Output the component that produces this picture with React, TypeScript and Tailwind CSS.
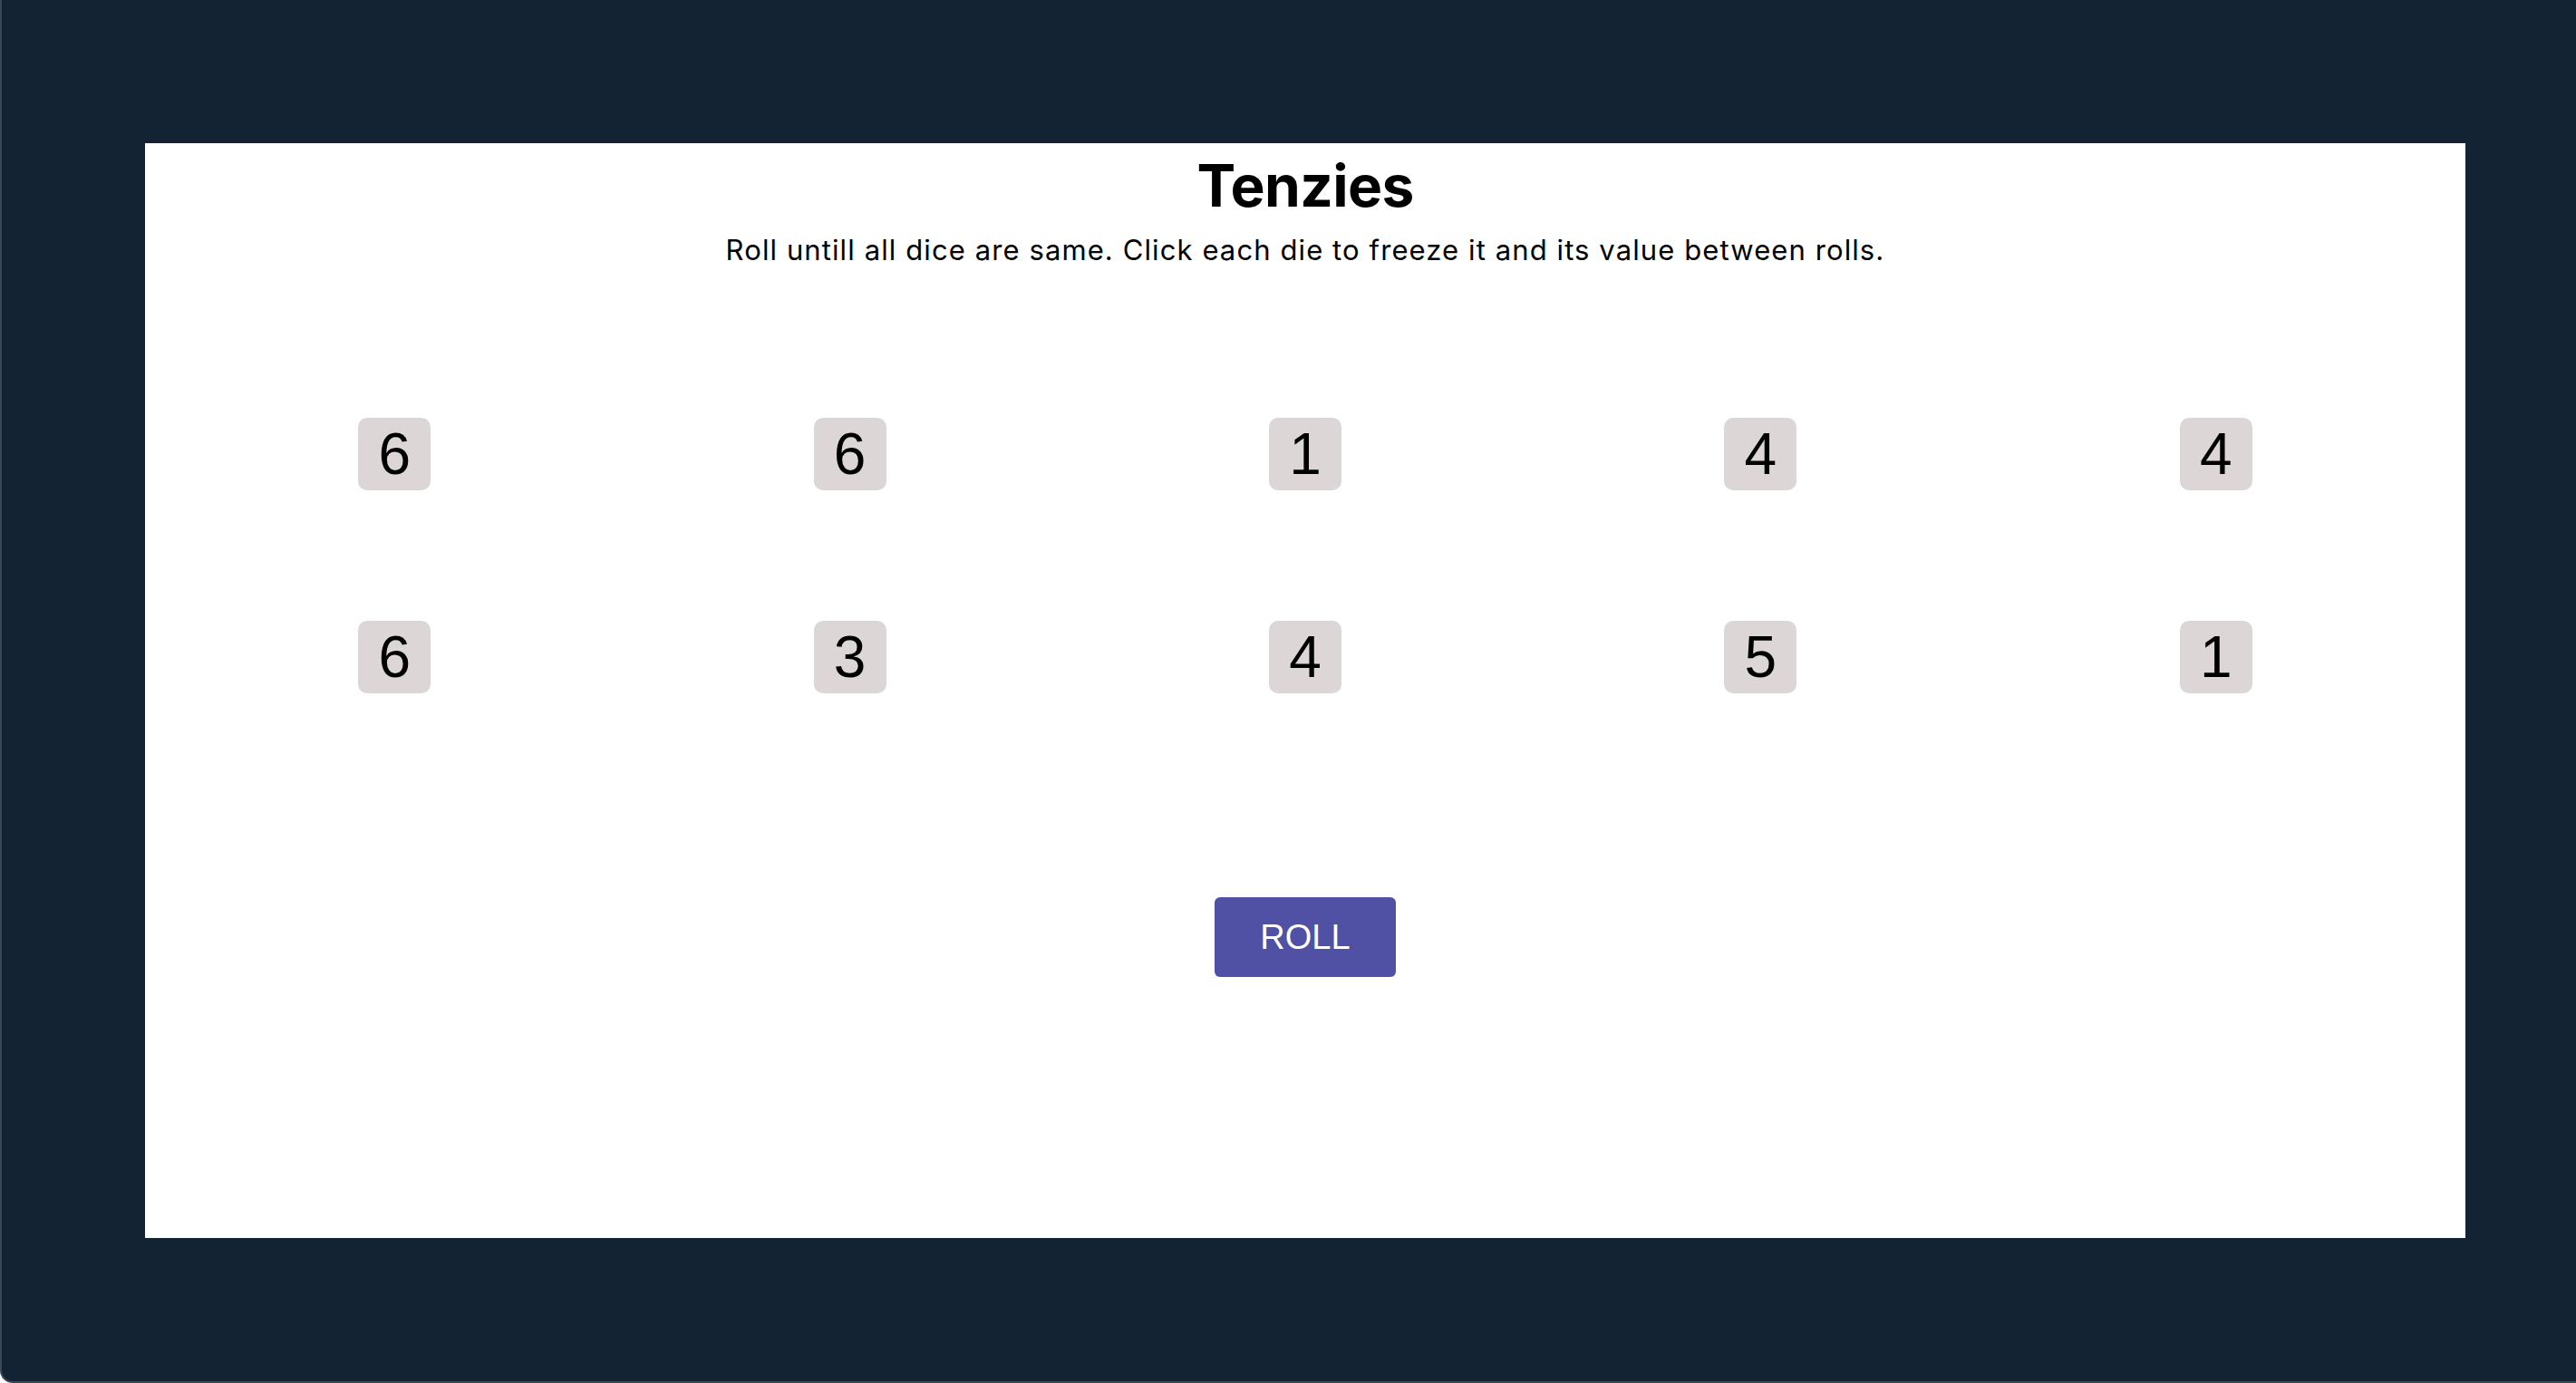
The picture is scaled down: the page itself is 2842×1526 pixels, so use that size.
const dice = [6, 6, 1, 4, 4, 6, 3, 4, 5, 1];

function Die({ value }: { value: number }) {
  return (
    <div className="w-[80px] h-[80px] rounded-[10px] bg-[#dcd6d7] flex items-center justify-center cursor-pointer">
      <span className="text-[64px] leading-none text-black font-['Liberation_Sans',Arial,sans-serif]">
        {value}
      </span>
    </div>
  );
}

export default function App() {
  return (
    <div className="w-full h-[1526px] bg-[#132334] border-l-2 border-b-2 border-[#3b4757] rounded-bl-[14px] pt-[158px] pl-[158px] pr-[122px] overflow-hidden">
      <main className="h-[1208px] bg-white flex flex-col items-center font-['Inter',sans-serif]">
        <h1 className="mt-[15px] text-[64px] leading-[64px] font-bold text-black tracking-[-0.01em]">
          Tenzies
        </h1>
        <p className="mt-[24px] text-[31px] leading-[30px] text-black tracking-[1.1px]">
          Roll untill all dice are same. Click each die to freeze it and its value between rolls.
        </p>

        {/* Dice */}
        <div className="mt-[170px] w-full px-[24px] grid grid-cols-5 gap-y-[144px] justify-items-center">
          {dice.map((d, i) => (
            <Die key={i} value={d} />
          ))}
        </div>

        <button className="mt-[225px] w-[200px] h-[88px] rounded-[6px] bg-[#5050a5] text-white text-[38px] font-['Liberation_Sans',Arial,sans-serif]">
          ROLL
        </button>
      </main>
    </div>
  );
}
